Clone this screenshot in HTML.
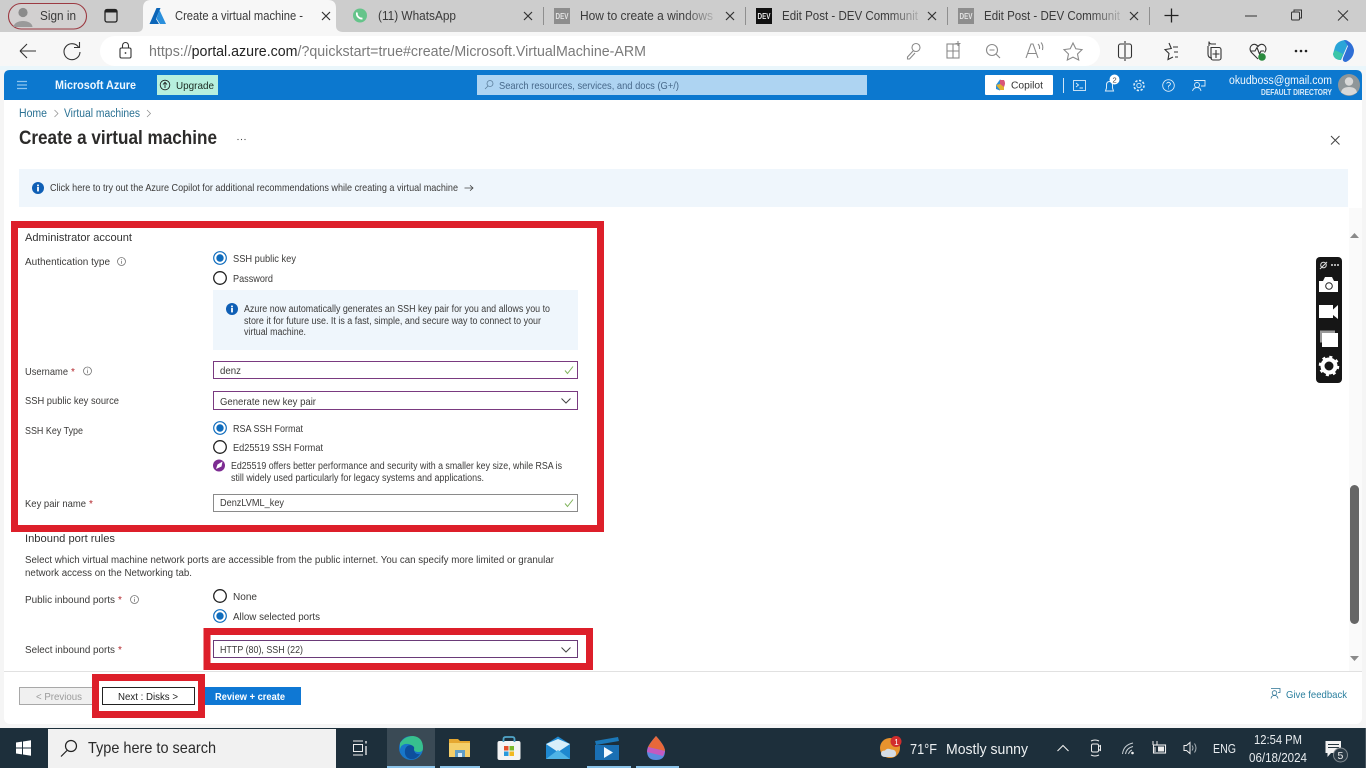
<!DOCTYPE html>
<html lang="en">
<head>
<meta charset="utf-8">
<title>Create a virtual machine</title>
<style>
html,body{margin:0;padding:0;width:1366px;height:768px;overflow:hidden;background:#fff}
svg{display:block;position:absolute;left:0;top:0}
text{font-family:"Liberation Sans",sans-serif;white-space:pre}
.t{font-size:13px;fill:#3a3a3a}
.b{font-size:10.5px;fill:#3b3a39}
.l{fill:none;stroke:#333;stroke-width:1.1}
.g{fill:none;stroke:#8a8a8a;stroke-width:1.1}
.w{fill:none;stroke:#dcecf8;stroke-width:1}
.d{fill:none;stroke:#fff;stroke-width:1.2}
</style>
</head>
<body>
<svg width="1366" height="768" viewBox="0 0 1366 768" xmlns="http://www.w3.org/2000/svg">
<defs>
<linearGradient id="fade"><stop offset="0" stop-color="#cdcdcd" stop-opacity="0"/><stop offset="1" stop-color="#cdcdcd" stop-opacity=".85"/></linearGradient>
<g id="xx"><path d="M-4 -4L4 4M4 -4L-4 4" fill="none" stroke="#333" stroke-width="1.2"/></g>
<g id="inf"><circle r="4" fill="none" stroke="#777" stroke-width=".8"/><path d="M0 -.8V2.2M0 -2.4V-1.6" stroke="#777" stroke-width=".8"/></g>
<g id="radioOn"><circle r="6.3" fill="#fff" stroke="#0f6cbd" stroke-width="1.2"/><circle r="3.7" fill="#0f6cbd"/></g>
<g id="radioOff"><circle r="6.3" fill="#fff" stroke="#222" stroke-width="1.3"/></g>
<g id="chk"><path d="M-4 0.5L-1.5 3.5L4 -3.5" fill="none" stroke="#7fb35a" stroke-width="1"/></g>
<g id="chev"><path d="M-4.5 -2L0 2.5L4.5 -2" fill="none" stroke="#444" stroke-width="1"/></g>
<g id="bigi"><circle r="6" fill="#0f5fb5"/><rect x="-.9" y="-1" width="1.8" height="4.4" fill="#fff"/><rect x="-.9" y="-3.4" width="1.8" height="1.7" fill="#fff"/></g>
</defs>

<!-- tab strip -->
<rect width="1366" height="32" fill="#cdcdcd"/>
<rect x="8.5" y="3.5" width="78" height="25.5" rx="12.7" fill="#d2d0d0" stroke="#9c3a42" stroke-width="1.1"/>
<circle cx="23" cy="12.5" r="4.6" fill="#8b8b8b"/><path d="M13.5 27C14 19 32 19 32.5 27Z" fill="#9a9a9a"/>
<text x="40" y="20" class="t" textLength="36" lengthAdjust="spacingAndGlyphs">Sign in</text>
<rect x="105" y="9.5" width="12" height="12.5" rx="2" fill="none" stroke="#222" stroke-width="1.3"/><rect x="105" y="9.5" width="12" height="3" fill="#222"/>
<path d="M137 32C141 32 143 30 143 26V8Q143 0 151 0H328Q336 0 336 8V26C336 30 339 32 343 32Z" fill="#f7f7f7"/>
<path d="M149.500 24L156.500 8H160.500L156 19L159 24Z" fill="#0b65b8"/><path d="M159.500 10L166 24H160L156.500 18.500Z" fill="#2a8fdc"/>
<text x="175" y="20" class="t" textLength="128" lengthAdjust="spacingAndGlyphs">Create a virtual machine -</text>
<use href="#xx" x="326" y="16"/>
<circle cx="360" cy="15.500" r="7" fill="#65c48a"/><path d="M357 12.500C356 16 359.500 19 362.500 18.500" fill="none" stroke="#fff" stroke-width="1.800"/>
<text x="378" y="20" class="t" textLength="78" lengthAdjust="spacingAndGlyphs">(11) WhatsApp</text>
<use href="#xx" x="528" y="16"/>
<rect x="543" y="7" width="1" height="18" fill="#8f8f8f"/>
<rect x="554" y="8" width="16" height="16" fill="#8d8d8d"/><text x="555.500" y="19" font-size="8" font-weight="bold" fill="#e5e5e5" textLength="13" lengthAdjust="spacingAndGlyphs">DEV</text>
<text x="580" y="20" class="t" textLength="133" lengthAdjust="spacingAndGlyphs">How to create a windows</text>
<rect x="683" y="6" width="32" height="20" fill="url(#fade)"/>
<use href="#xx" x="730" y="16"/>
<rect x="745" y="7" width="1" height="18" fill="#8f8f8f"/>
<rect x="756" y="8" width="16" height="16" fill="#111"/><text x="757.500" y="19" font-size="8" font-weight="bold" fill="#eee" textLength="13" lengthAdjust="spacingAndGlyphs">DEV</text>
<text x="782" y="20" class="t" textLength="136" lengthAdjust="spacingAndGlyphs">Edit Post - DEV Communit</text>
<rect x="888" y="6" width="32" height="20" fill="url(#fade)"/>
<use href="#xx" x="932" y="16"/>
<rect x="947" y="7" width="1" height="18" fill="#8f8f8f"/>
<rect x="958" y="8" width="16" height="16" fill="#8d8d8d"/><text x="959.500" y="19" font-size="8" font-weight="bold" fill="#e5e5e5" textLength="13" lengthAdjust="spacingAndGlyphs">DEV</text>
<text x="984" y="20" class="t" textLength="136" lengthAdjust="spacingAndGlyphs">Edit Post - DEV Communit</text>
<rect x="1090" y="6" width="32" height="20" fill="url(#fade)"/>
<use href="#xx" x="1134" y="16"/>
<rect x="1149" y="7" width="1" height="18" fill="#8f8f8f"/>
<path d="M1171.500 8.500V22.500M1164.500 15.500H1178.500" stroke="#222" stroke-width="1.300"/>
<path d="M1245 16H1257" stroke="#333" stroke-width="1"/>
<rect x="1291.500" y="12" width="8" height="8" rx="1" fill="none" stroke="#333"/><path d="M1294 12V10H1301.500V18H1299.500" fill="none" stroke="#333"/>
<path d="M1338 10.500L1348 20.500M1348 10.500L1338 20.500" stroke="#333" stroke-width="1"/>

<!-- address bar -->
<rect y="32" width="1366" height="34" fill="#f7f7f7"/>
<rect y="66" width="1366" height="4" fill="#eaf6fb"/>
<rect x="100" y="36" width="1000" height="30" rx="15" fill="#fff"/>
<path d="M20 51H36M20 51L27 44M20 51L27 58" class="l" stroke-width="1.300"/>
<path d="M78.500 47A8 8 0 1 0 80 52M79.500 42V47.500H74" class="l"/>
<rect x="120" y="48" width="11" height="10" rx="1.500" class="l" stroke="#555"/><path d="M122.500 48V45.500A3 3 0 0 1 128.500 45.500V48" class="l"/><circle cx="125.500" cy="53" r=".9" fill="#333"/>
<text x="149" y="56" font-size="15" fill="#7a7a7a" textLength="497" lengthAdjust="spacingAndGlyphs">https://<tspan fill="#222">portal.azure.com</tspan>/?quickstart=true#create/Microsoft.VirtualMachine-ARM</text>
<g class="g"><circle cx="916" cy="47.500" r="4"/><path d="M913.500 50.500L907.500 57V59H909.500L915 53"/>
<rect x="947" y="44" width="12" height="14"/><path d="M947 51H959M953 44V58"/><path d="M958 41V46M955.500 43.500H960.500"/>
<circle cx="992" cy="50" r="5.500"/><path d="M996 54L1000 58M989.500 50H994.500"/>
<path d="M1026 58L1031 44H1033L1038 58M1028 53.500H1036M1038 44Q1040 46 1039.500 49M1041 42.500Q1043.500 45 1042.500 50"/>
<path d="M1073 43L1075.800 48.800L1082 49.600L1077.500 54L1078.700 60L1073 57.100L1067.300 60L1068.500 54L1064 49.600L1070.200 48.800Z"/></g>
<g class="l"><path d="M1124 44H1120.500A2 2 0 0 0 1118.500 46V56A2 2 0 0 0 1120.500 58H1124M1126 44H1129.500A2 2 0 0 1 1131.500 46V56A2 2 0 0 1 1129.500 58H1126M1125 41V61"/>
<path d="M1169 43L1171.300 48.500L1165 49.600L1169 53.500L1168 59.500L1173 57M1173 47H1178M1174 52H1178M1175 57H1178"/>
<path d="M1209 46V41.500Q1209 44 1212 44H1216M1208 46V54Q1208 58 1212 58M1211 47.500H1219A2 2 0 0 1 1221 49.500V58A2 2 0 0 1 1219 60H1213A2 2 0 0 1 1211 58Z"/><path d="M1216 50V58M1212.500 54H1219.500"/>
<path d="M1258 59L1251.500 52.500C1247 47 1254 41 1258 46.500C1262 41 1269 47 1264.500 52.500"/><path d="M1250 51H1255L1257 47.500L1259.500 54L1261 51H1264"/></g>
<circle cx="1262" cy="57" r="3.800" fill="#2a8a3e"/>
<circle cx="1296" cy="51" r="1.300" fill="#222"/><circle cx="1301" cy="51" r="1.300" fill="#222"/><circle cx="1306" cy="51" r="1.300" fill="#222"/>
<path d="M1335 47Q1337 41 1345 40Q1349 40 1348 44L1341 60Q1334 60 1333 54Z" fill="#2aa5d8"/><path d="M1344 40Q1352 41 1354 50Q1354 58 1346 62Q1342 62 1343 58L1348 46Z" fill="#2f6fd6"/><path d="M1335 50L1343 54L1340 60Q1334 59 1333 54Z" fill="#3cc6a8"/>

<!-- portal frame -->
<rect x="0" y="70" width="1366" height="658" fill="#f5f5f5"/>
<rect x="4" y="76" width="1358" height="648" rx="6" fill="#fff"/>
<path d="M4 100V76Q4 70 10 70H1356Q1362 70 1362 76V100Z" fill="#0c78cf"/>
<path d="M17 81.500H27M17 85H27M17 88.500H27" stroke="#8ec5ee" stroke-width="1.200"/>
<text x="55" y="89" font-size="11.500" font-weight="bold" fill="#f0f8ff" textLength="81" lengthAdjust="spacingAndGlyphs">Microsoft Azure</text>
<rect x="157" y="75" width="61" height="20" fill="#b7f0de"/>
<circle cx="165" cy="85" r="4.800" fill="none" stroke="#222" stroke-width=".9"/><path d="M165 88V82.500M163 84.500L165 82.300L167 84.500" fill="none" stroke="#222" stroke-width=".9"/>
<text x="176" y="89" font-size="10.500" fill="#1b2a20" textLength="38" lengthAdjust="spacingAndGlyphs">Upgrade</text>
<rect x="477" y="75" width="390" height="20" fill="#aed4f2"/>
<circle cx="490" cy="83.500" r="3" fill="none" stroke="#5d7f9c" stroke-width=".8"/><path d="M488 86L485 89" stroke="#5d7f9c" stroke-width=".8"/>
<text x="499" y="89" font-size="10.500" fill="#47688a" textLength="180" lengthAdjust="spacingAndGlyphs">Search resources, services, and docs (G+/)</text>
<rect x="985" y="75" width="68" height="20" rx="1" fill="#fff"/>
<path d="M996 85L1000 79.500L1003 81L1000 90.500L996 89Z" fill="#2a8fdc"/><path d="M1000 80H1004Q1006 83 1004 87L1000 90Z" fill="#d8557a"/><path d="M996 85L1000 90H1004V87L1000 84Z" fill="#e0b030"/>
<text x="1011" y="88.500" font-size="10.500" fill="#333" textLength="32" lengthAdjust="spacingAndGlyphs">Copilot</text>
<rect x="1063" y="78" width="1" height="15" fill="#cfe5f6"/>
<g class="w"><rect x="1073.500" y="80.500" width="12" height="10" stroke-width=".9"/><path d="M1076 83L1078.500 85L1076 87M1079.500 88H1083" stroke-width=".9"/>
<path d="M1105.500 91H1113.500L1112.500 88V85Q1112.500 81.500 1109.500 81.500Q1106.500 81.500 1106.500 85V88Z"/>
<circle cx="1139" cy="85.500" r="2.200" stroke-width=".9"/><circle cx="1139" cy="85.500" r="5" stroke-width="1.600" stroke-dasharray="2.300 1.600"/>
<circle cx="1168.500" cy="85.500" r="5.800" stroke-width=".9"/><path d="M1166.500 83.500Q1168.500 81 1170.500 83.500Q1170.500 85 1168.500 86V87.500M1168.500 88.500V89.300" stroke-width=".9"/>
<circle cx="1197" cy="85" r="2.500" stroke-width=".9"/><path d="M1192.500 91Q1193.500 87.500 1197 87.500Q1200.500 87.500 1201 91M1194 80.500H1205V86H1201" stroke-width=".9"/></g>
<circle cx="1114.500" cy="79.500" r="5" fill="#fff"/><text x="1112.500" y="82.500" font-size="7.500" fill="#444">2</text>
<text x="1229" y="84" font-size="11.500" fill="#f0f7fd" textLength="103" lengthAdjust="spacingAndGlyphs">okudboss@gmail.com</text>
<text x="1261" y="95" font-size="8" font-weight="bold" fill="#dcecf8" textLength="71" lengthAdjust="spacingAndGlyphs">DEFAULT DIRECTORY</text>
<circle cx="1349" cy="85" r="11" fill="#8f9699"/><circle cx="1349" cy="81.500" r="4.200" fill="#d8d8d8"/><path d="M1341 92.500Q1342 87 1349 87Q1356 87 1357 92.500Q1349 98 1341 92.500Z" fill="#d8d8d8"/>

<!-- breadcrumb + title -->
<text x="19" y="117" font-size="11.500" fill="#2a7193" textLength="28" lengthAdjust="spacingAndGlyphs">Home</text>
<path d="M54.500 110L58 113.500L54.500 117" fill="none" stroke="#888" stroke-width=".7"/>
<text x="64" y="117" font-size="11.500" fill="#2a7193" textLength="76" lengthAdjust="spacingAndGlyphs">Virtual machines</text>
<path d="M147 110L150.500 113.500L147 117" fill="none" stroke="#888" stroke-width=".7"/>
<text x="19" y="144" font-size="19" font-weight="bold" fill="#2c2b2a" textLength="198" lengthAdjust="spacingAndGlyphs">Create a virtual machine</text>
<circle cx="238" cy="139.500" r=".6" fill="#444"/><circle cx="241.500" cy="139.500" r=".6" fill="#444"/><circle cx="245" cy="139.500" r=".6" fill="#444"/>
<path d="M1331 136L1339.500 144.500M1339.500 136L1331 144.500" stroke="#444" stroke-width="1"/>
<rect x="19" y="169" width="1329" height="38" fill="#eff6fc"/>
<use href="#bigi" x="38" y="188"/>
<text x="50" y="191" class="b" textLength="408" lengthAdjust="spacingAndGlyphs">Click here to try out the Azure Copilot for additional recommendations while creating a virtual machine</text>
<path d="M464.500 188H473M470 185.300L473 188L470 190.700" fill="none" stroke="#444" stroke-width=".8"/>

<!-- form: admin account -->
<rect x="14.500" y="224.500" width="586" height="304" fill="none" stroke="#dd1f2a" stroke-width="7"/>
<text x="25" y="241" font-size="11" fill="#333" textLength="107" lengthAdjust="spacingAndGlyphs">Administrator account</text>
<text x="25" y="265" class="b" textLength="85" lengthAdjust="spacingAndGlyphs">Authentication type</text>
<use href="#inf" x="121.500" y="261.500"/>
<use href="#radioOn" x="220" y="258"/>
<text x="233" y="262" class="b" textLength="63" lengthAdjust="spacingAndGlyphs">SSH public key</text>
<use href="#radioOff" x="220" y="278"/>
<text x="233" y="282" class="b" textLength="40" lengthAdjust="spacingAndGlyphs">Password</text>
<rect x="213" y="290" width="365" height="60" fill="#eff6fc"/>
<use href="#bigi" x="232" y="309"/>
<text x="244" y="312" font-size="10" fill="#3b3a39" textLength="306" lengthAdjust="spacingAndGlyphs">Azure now automatically generates an SSH key pair for you and allows you to</text>
<text x="244" y="324" font-size="10" fill="#3b3a39" textLength="297" lengthAdjust="spacingAndGlyphs">store it for future use. It is a fast, simple, and secure way to connect to your</text>
<text x="244" y="335" font-size="10" fill="#3b3a39" textLength="62" lengthAdjust="spacingAndGlyphs">virtual machine.</text>

<text x="25" y="375" class="b" textLength="43" lengthAdjust="spacingAndGlyphs">Username</text>
<text x="71" y="375" font-size="10" fill="#b3262c">*</text>
<use href="#inf" x="87.500" y="371"/>
<rect x="213.500" y="361.500" width="364" height="17" fill="#fff" stroke="#7a3a80"/>
<text x="220" y="374" class="b" textLength="21" lengthAdjust="spacingAndGlyphs">denz</text>
<use href="#chk" x="569" y="370"/>

<text x="25" y="404" class="b" textLength="94" lengthAdjust="spacingAndGlyphs">SSH public key source</text>
<rect x="213.500" y="391.500" width="364" height="18" fill="#fff" stroke="#7a3a80"/>
<text x="220" y="405" class="b" textLength="96" lengthAdjust="spacingAndGlyphs">Generate new key pair</text>
<use href="#chev" x="566" y="400.500"/>

<text x="25" y="434" class="b" textLength="58" lengthAdjust="spacingAndGlyphs">SSH Key Type</text>
<use href="#radioOn" x="220" y="428"/>
<text x="233" y="432" class="b" textLength="70" lengthAdjust="spacingAndGlyphs">RSA SSH Format</text>
<use href="#radioOff" x="220" y="447"/>
<text x="233" y="451" class="b" textLength="90" lengthAdjust="spacingAndGlyphs">Ed25519 SSH Format</text>
<circle cx="219" cy="465.500" r="6" fill="#7d2c92"/><path d="M216 469L217.500 464.500L222.500 461.500L221.500 466.500Z" fill="#fff"/>
<text x="231" y="469" font-size="10" fill="#3b3a39" textLength="331" lengthAdjust="spacingAndGlyphs">Ed25519 offers better performance and security with a smaller key size, while RSA is</text>
<text x="231" y="481" font-size="10" fill="#3b3a39" textLength="253" lengthAdjust="spacingAndGlyphs">still widely used particularly for legacy systems and applications.</text>

<text x="25" y="507" class="b" textLength="61" lengthAdjust="spacingAndGlyphs">Key pair name</text>
<text x="89" y="507" font-size="10" fill="#b3262c">*</text>
<rect x="213.500" y="494.500" width="364" height="17" fill="#fff" stroke="#8a8a8a"/>
<text x="220" y="506" class="b" textLength="64" lengthAdjust="spacingAndGlyphs">DenzLVML_key</text>
<use href="#chk" x="569" y="503"/>

<!-- inbound -->
<text x="25" y="542" font-size="11" fill="#333" textLength="90" lengthAdjust="spacingAndGlyphs">Inbound port rules</text>
<text x="25" y="563" font-size="10" fill="#3b3a39" textLength="529" lengthAdjust="spacingAndGlyphs">Select which virtual machine network ports are accessible from the public internet. You can specify more limited or granular</text>
<text x="25" y="576" font-size="10" fill="#3b3a39" textLength="167" lengthAdjust="spacingAndGlyphs">network access on the Networking tab.</text>
<text x="25" y="603" class="b" textLength="90" lengthAdjust="spacingAndGlyphs">Public inbound ports</text>
<text x="118" y="603" font-size="10" fill="#b3262c">*</text>
<use href="#inf" x="134.500" y="599.500"/>
<use href="#radioOff" x="220" y="596"/>
<text x="233" y="600" class="b" textLength="24" lengthAdjust="spacingAndGlyphs">None</text>
<use href="#radioOn" x="220" y="616"/>
<text x="233" y="620" class="b" textLength="87" lengthAdjust="spacingAndGlyphs">Allow selected ports</text>
<text x="25" y="653" class="b" textLength="90" lengthAdjust="spacingAndGlyphs">Select inbound ports</text>
<text x="118" y="653" font-size="10" fill="#b3262c">*</text>
<rect x="207" y="631.500" width="382.500" height="35" fill="none" stroke="#dd1f2a" stroke-width="7"/>
<rect x="213.500" y="640.500" width="364" height="17" fill="#fff" stroke="#6a3a78"/>
<text x="220" y="653" class="b" textLength="83" lengthAdjust="spacingAndGlyphs">HTTP (80), SSH (22)</text>
<use href="#chev" x="566" y="649.500"/>

<!-- scrollbar -->
<rect x="1349" y="208" width="13" height="463" fill="#fafafa"/>
<path d="M1350 238L1354.500 233L1359 238Z" fill="#8a8a8a"/>
<rect x="1350" y="485" width="9" height="139" rx="4.500" fill="#666"/>
<path d="M1350 656L1354.500 661L1359 656Z" fill="#8a8a8a"/>

<!-- capture widget -->
<rect x="1316" y="257" width="26" height="126" rx="4" fill="#161616"/>
<circle cx="1323.500" cy="265" r="2.800" fill="none" stroke="#ddd" stroke-width="1"/><path d="M1320 269L1327 262" stroke="#ddd"/>
<path d="M1331 265H1339" stroke="#ddd" stroke-width="1.500" stroke-dasharray="2 1"/>
<path d="M1319 281H1323L1325 277H1332L1334 281H1338V292H1319Z" fill="#fff"/><circle cx="1329" cy="286" r="3.300" fill="#fff" stroke="#222" stroke-width="1"/>
<path d="M1319 305H1333V309.500L1338 305V319L1333 315V318H1319Z" fill="#fff"/>
<path d="M1320 334V330.500H1335V333H1322V342.500H1320Z" fill="#999"/><rect x="1322" y="333" width="16" height="14" fill="#fff"/>
<circle cx="1329" cy="366" r="6.500" fill="none" stroke="#fff" stroke-width="4"/><circle cx="1329" cy="366" r="9" fill="none" stroke="#fff" stroke-width="2.500" stroke-dasharray="3 4.070"/>

<!-- footer -->
<rect x="4" y="671" width="1358" height="1" fill="#e1e1e1"/>
<rect x="19.500" y="687.500" width="80" height="17" fill="#f0f0f0" stroke="#a8a8a8"/>
<text x="36" y="700" class="b" style="fill:#9b9b9b" textLength="46" lengthAdjust="spacingAndGlyphs">&lt; Previous</text>
<rect x="205" y="687" width="96" height="18" fill="#0f78d4"/>
<text x="215" y="700" font-size="10.500" font-weight="bold" fill="#fff" textLength="70" lengthAdjust="spacingAndGlyphs">Review + create</text>
<rect x="95.500" y="677.500" width="106" height="37" fill="#fff" stroke="#dd1f2a" stroke-width="7"/>
<rect x="102.500" y="687.500" width="92" height="17" fill="#fff" stroke="#222"/>
<text x="118" y="700" class="b" style="fill:#222" textLength="60" lengthAdjust="spacingAndGlyphs">Next : Disks &gt;</text>
<circle cx="1274.500" cy="693" r="2.300" fill="none" stroke="#2a7193" stroke-width=".8"/><path d="M1271 698.500Q1271.500 695.500 1274.500 695.500Q1277.500 695.500 1278 698.500M1271 688.500H1280V692.500H1278" fill="none" stroke="#2a7193" stroke-width=".8"/>
<text x="1286" y="698" class="b" style="fill:#2a7f9e" textLength="61" lengthAdjust="spacingAndGlyphs">Give feedback</text>

<!-- taskbar -->
<rect y="728" width="1366" height="40" fill="#1d2f3b"/>
<path d="M16 742.500L22 741.600V747.500H16ZM23 741.500L31 740.300V747.500H23ZM16 748.500H22V754.400L16 753.500ZM23 748.500H31V755.700L23 754.500Z" fill="#fff"/>
<rect x="48" y="729" width="288" height="39" fill="#f1f1f1"/>
<circle cx="71" cy="746" r="5.500" fill="none" stroke="#222" stroke-width="1.200"/><path d="M67 750.500L61 756.500" stroke="#222" stroke-width="1.200"/>
<text x="88" y="753" font-size="16" fill="#2a2a2a" textLength="128" lengthAdjust="spacingAndGlyphs">Type here to search</text>
<path d="M353 741H363M353 755H363" stroke="#eee" stroke-width="1"/><rect x="353.500" y="744.500" width="9" height="7" fill="none" stroke="#eee"/><path d="M366 741V743.500M366 746V755" stroke="#eee" stroke-width="1.300"/>
<rect x="387" y="728" width="48" height="40" fill="#3a4a55"/>
<rect x="387" y="766" width="48" height="2" fill="#8cc4ea"/>
<rect x="440" y="766" width="40" height="2" fill="#8cc4ea"/>
<rect x="587" y="766" width="44" height="2" fill="#8cc4ea"/>
<rect x="636" y="766" width="43" height="2" fill="#8cc4ea"/>
<!-- edge -->
<circle cx="411" cy="748" r="12" fill="#1877c9"/><path d="M400 743Q405 736 413 736Q423 737 423 748Q423 752 419 752Q413 752 414 748Q411 743 405 744Q401 745 400 749Z" fill="#37c08e"/><path d="M405 750Q406 745 411 745Q415 746 414 750Q415 755 420 754Q416 760 410 759Q404 757 405 750Z" fill="#0d4f9c"/>
<!-- explorer -->
<path d="M449 739H458L460 741H470V745H449Z" fill="#e5a730"/><rect x="449" y="743" width="21" height="14" fill="#f4cf6a"/><rect x="455" y="750" width="10" height="7" fill="#5f9fc9"/><rect x="458" y="753" width="4" height="4" fill="#dcecf5"/>
<!-- store -->
<rect x="497.500" y="741" width="23" height="19" rx="2" fill="#f4f4f4"/><path d="M503.500 742V739Q503.500 737 506 737H512Q514.500 737 514.500 739V742" fill="none" stroke="#50a5c8" stroke-width="1.800"/>
<rect x="504" y="746" width="4.500" height="4.500" fill="#e5502a"/><rect x="509.500" y="746" width="4.500" height="4.500" fill="#7ab82a"/><rect x="504" y="751.500" width="4.500" height="4.500" fill="#2a9adc"/><rect x="509.500" y="751.500" width="4.500" height="4.500" fill="#f2b920"/>
<!-- mail -->
<path d="M546 744L558 736.500L570 744V759H546Z" fill="#1e88d0"/><path d="M546 744L558 752L570 744L558 739Z" fill="#d8effa"/><path d="M546 759L558 750L570 759Z" fill="#4fb4e6"/>
<!-- video -->
<path d="M595 741L618 737L619 741L596 745Z" fill="#1b78b8"/><rect x="595" y="745" width="24" height="15" fill="#1a6fb3"/><path d="M604 747L613 752.500L604 758Z" fill="#f4faff"/>
<!-- drop -->
<path d="M656 736Q665 746 665 751Q665 760 656 760Q647 760 647 751Q647 746 656 736Z" fill="#5a8ce0"/><path d="M656 736Q665 746 665 751L648 747Q650 743 656 736Z" fill="#e8683a"/><path d="M648 747L665 751L663 756L647 752Z" fill="#c45ac0"/>

<!-- tray -->
<circle cx="890" cy="748" r="10" fill="#e8932e"/><path d="M885 757Q881 757 881 753.500Q881 750.500 885 750.500Q887 747.500 891 749.500Q896 749.500 896 753.500Q896 757 893 757Z" fill="#d5dde5"/><circle cx="896" cy="741.500" r="5.500" fill="#d12d2d"/><text x="894.300" y="745" font-size="8" fill="#fff">1</text>
<text x="910" y="754" font-size="15" fill="#edf0f2" textLength="27" lengthAdjust="spacingAndGlyphs">71°F</text>
<text x="946" y="754" font-size="15" fill="#edf0f2" textLength="82" lengthAdjust="spacingAndGlyphs">Mostly sunny</text>
<path d="M1057.500 751L1063 745.500L1068.500 751" fill="none" stroke="#eee" stroke-width="1.100"/>
<rect x="1091.500" y="744" width="7" height="8" rx="1.500" fill="none" stroke="#eee" stroke-width="1"/><path d="M1098.500 746.500L1100.500 745.500V750.500L1098.500 749.500M1091 741Q1095 739 1099 741M1091 755Q1095 757 1099 755" fill="none" stroke="#eee" stroke-width="1"/>
<path d="M1122.500 754Q1123.500 745 1133 743M1125.500 754Q1126.500 748 1133 746.500M1128.500 754Q1129.500 751 1132 750" fill="none" stroke="#c7ced3" stroke-width="1"/><circle cx="1132.500" cy="753" r="1.300" fill="#eee"/>
<rect x="1153.500" y="745" width="12" height="8" fill="none" stroke="#eee" stroke-width="1.100"/><rect x="1158" y="746.500" width="6" height="5" fill="#eee"/><path d="M1153 741V745M1157 741V745M1155 747V752" stroke="#eee" stroke-width="1"/>
<path d="M1184 745.500H1186.500L1190 742.500V753.500L1186.500 750.500H1184Z" fill="none" stroke="#eee"/><path d="M1192 745.500Q1194 748 1192 750.500M1194.500 743.500Q1197.500 748 1194.500 752.500" fill="none" stroke="#a7b0b6"/>
<text x="1213" y="753" font-size="13" fill="#e8ecef" textLength="23" lengthAdjust="spacingAndGlyphs">ENG</text>
<text x="1254" y="744" font-size="13" fill="#e8ecef" textLength="48" lengthAdjust="spacingAndGlyphs">12:54 PM</text>
<text x="1249" y="762" font-size="13" fill="#e8ecef" textLength="58" lengthAdjust="spacingAndGlyphs">06/18/2024</text>
<path d="M1325.500 741H1341V753H1331L1327.500 757V753H1325.500Z" fill="#f2f2f2"/><path d="M1328 744.500H1339M1328 747.500H1339" stroke="#26363f" stroke-width=".9"/>
<circle cx="1340.500" cy="755" r="7" fill="#2a3a45" stroke="#828b91" stroke-width="1"/><text x="1337.500" y="759" font-size="10.500" fill="#eee">5</text>
<rect x="1365" y="728" width="1" height="40" fill="#47555f"/>
</svg>
</body>
</html>
